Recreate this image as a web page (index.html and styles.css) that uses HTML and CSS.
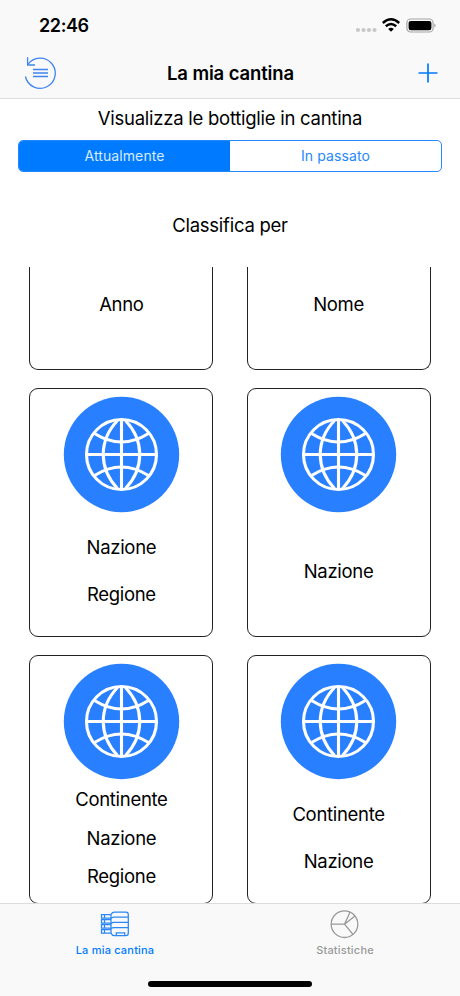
FILE: index.html
```html
<!DOCTYPE html>
<html lang="it">
<head>
<meta charset="utf-8">
<title>La mia cantina</title>
<link rel="stylesheet" href="styles.css">
</head>
<body>
<svg class="defs" width="0" height="0" aria-hidden="true">
  <symbol id="globe" viewBox="-58.5 -58.5 117 117">
    <circle r="57.7" fill="#287fff"/>
    <g fill="none" stroke="#fff" stroke-width="3.1">
      <circle r="35"/>
      <path d="M0-35V35M-35 0H35"/>
      <path d="M-4-34C-23-14-23 14-4 34M4-34C23-14 23 14 4 34"/>
      <path d="M-27-21Q0-4 27-21M-27 21Q0 4 27 21"/>
    </g>
  </symbol>
</svg>
<div class="screen">
  <header class="header">
    <div class="status">
      <span class="time">22:46</span>
      <div class="indicators">
        <svg class="dots" width="22" height="18" viewBox="0 0 22 18"><g fill="#c8c8c8"><circle cx="2" cy="13" r="2.1"/><circle cx="7.5" cy="13" r="2.1"/><circle cx="13" cy="13" r="2.1"/><circle cx="18.5" cy="13" r="2.1"/></g></svg>
        <svg class="wifi" width="18" height="18" viewBox="0 0 18 18"><g fill="none" stroke="#000" stroke-width="2.5"><path d="M.8 6Q9-1.4 17.2 6"/><path d="M3.8 9.2Q9 4.8 14.2 9.2"/></g><path d="M6.2 11.9Q9 9.7 11.8 11.9L9 14.8Z"/></svg>
        <svg class="battery" width="30" height="18" viewBox="0 0 30 18"><rect x=".9" y="2" width="26.2" height="13" rx="3.8" fill="none" stroke="#a5a5a5" stroke-width="1.2"/><rect x="2.6" y="3.9" width="22.8" height="9.3" rx="2.2"/><path d="M28.3 6.5q2.8 1.9 0 4z" fill="#a5a5a5"/></svg>
      </div>
    </div>
    <nav class="navbar">
      <svg class="history" width="34" height="34" viewBox="0 0 34 34"><g fill="none" stroke="#3f85f0" stroke-width="1.3"><path d="M2.4 20.5A15.1 15.1 0 1 0 4.9 8.4"/><path d="M4.6 1.3V9H12"/><path d="M10 13.5H25M10 17H25M10 20.5H25" stroke-width="1.5"/></g></svg>
      <h1 class="title">La mia cantina</h1>
      <svg class="plus" width="20" height="20" viewBox="0 0 20 20"><path d="M10 .5V19.5M.5 10H19.5" stroke="#007aff" stroke-width="1.7"/></svg>
    </nav>
  </header>
  <main class="content">
    <p class="prompt">Visualizza le bottiglie in cantina</p>
    <div class="segments"><span class="segment active">Attualmente</span><span class="segment">In passato</span></div>
    <h2 class="subtitle">Classifica per</h2>
    <div class="scroller">
      <div class="grid">
        <div class="card partial"><span>Anno</span></div>
        <div class="card partial"><span>Nome</span></div>
        <div class="card"><svg class="globe"><use href="#globe"/></svg><div class="labels"><span>Nazione</span><span>Regione</span></div></div>
        <div class="card"><svg class="globe"><use href="#globe"/></svg><div class="labels"><span>Nazione</span></div></div>
        <div class="card"><svg class="globe"><use href="#globe"/></svg><div class="labels three"><span>Continente</span><span>Nazione</span><span>Regione</span></div></div>
        <div class="card"><svg class="globe"><use href="#globe"/></svg><div class="labels"><span>Continente</span><span>Nazione</span></div></div>
      </div>
    </div>
  </main>
  <footer class="footer">
    <div class="tabs">
      <div class="tab selected">
        <svg width="30" height="30" viewBox="0 0 30 30"><g fill="none" stroke="#2a87f5" stroke-width="1.25"><path d="M11 5.6Q12 3.1 14.5 3.1H26Q28.3 3.1 28.3 5.5V24Q28.3 26.6 26 26.6H14.5Q12 26.6 11 24.2H1.5V20.6H11"/><path d="M11 5.6H1.5V9H11M11 10.6H1.5V14H11M11 15.6H1.5V19H11M4.5 5.6V9M4.5 10.6V14M4.5 15.6V19M4.5 20.6V24.2M11 5.6V24.2"/><path d="M11 9.5Q12 8.2 14 8.2H28M11 14.5Q12 13.3 14 13.3H28M11 19.7Q12 18.5 14 18.5H28M16.3 26.5V23.8H24.7V26.5"/></g></svg>
        <span>La mia cantina</span>
      </div>
      <div class="tab">
        <svg width="30" height="30" viewBox="0 0 30 30"><g fill="none" stroke="#999" stroke-width="1.3"><circle cx="14.5" cy="15.2" r="13.3"/><path d="M1.2 15.2H14.5L20.1 3.1M14.5 15.2L25 7M14.5 15.2L23 25.4"/></g></svg>
        <span>Statistiche</span>
      </div>
    </div>
    <div class="home-indicator"></div>
  </footer>
</div>
</body>
</html>
```
FILE: styles.css
```css
* { box-sizing: border-box; }

body {
  margin: 0;
  font-family: Inter, "Liberation Sans", sans-serif;
  color: #000;
  background: #fff;
}

h1, h2, p { margin: 0; font-weight: 400; }
svg { display: block; flex: none; }
.defs { position: absolute; }

.screen {
  width: 460px;
  height: 996px;
  display: flex;
  flex-direction: column;
  overflow: hidden;
}

.header {
  height: 99px;
  flex: none;
  background: #f9f9f9;
  border-bottom: 1px solid #dedede;
}

.status {
  height: 50px;
  padding: 1px 24px 0 39px;
  display: flex;
  align-items: center;
  justify-content: space-between;
}

.time { font-size: 18px; font-weight: 600; line-height: 22px; letter-spacing: -0.4px; }
.indicators { display: flex; gap: 6px; }
.dots { margin-right: -2px; }

.navbar {
  height: 46px;
  padding: 0 22px 0 23px;
  display: grid;
  grid-template-columns: 34px 1fr 34px;
  align-items: center;
}

.title {
  text-align: center;
  font-size: 18.5px;
  font-weight: 600;
  line-height: 24px;
  letter-spacing: -0.13px;
}

.plus { justify-self: end; }

.content {
  height: 805px;
  flex: none;
  display: flex;
  flex-direction: column;
}

.prompt, .subtitle {
  text-align: center;
  font-size: 18.5px;
  line-height: 24px;
  letter-spacing: -0.26px;
}

.prompt { padding-top: 7px; height: 40.5px; }

.segments {
  height: 32.5px;
  margin: 0 18px;
  flex: none;
  display: flex;
  border: 1.3px solid #2688ff;
  border-radius: 5px;
  overflow: hidden;
}

.segment {
  flex: 1;
  display: flex;
  align-items: center;
  justify-content: center;
  padding-bottom: 1px;
  font-size: 14px;
  letter-spacing: 0.1px;
  color: #2688ff;
}

.segment.active { background: #007aff; color: #d9ebff; }
.subtitle { height: 95px; padding-top: 41px; }

.scroller { flex: 1; overflow: hidden; }

.grid {
  display: grid;
  grid-template-columns: 184px 184px;
  grid-template-rows: 103px 249px 249px;
  gap: 18px 33.2px;
  padding-left: 29.4px;
}

.card {
  border: 1.3px solid #222;
  border-radius: 9px;
  display: flex;
  flex-direction: column;
  align-items: center;
  padding-top: 6.5px;
  font-size: 18.5px;
  line-height: 23px;
  letter-spacing: -0.3px;
}

.card.partial {
  border-top: 0;
  border-radius: 0 0 9px 9px;
  padding-top: 26px;
}

.globe { width: 117px; height: 117px; }

.labels {
  height: 117px;
  display: flex;
  flex-direction: column;
  align-items: center;
  justify-content: center;
  gap: 23.6px;
}

.labels.three { gap: 15.5px; }

.footer {
  flex: 1;
  background: #f9f9f9;
  box-shadow: 0 -1px #dcdcdc;
  display: flex;
  flex-direction: column;
  justify-content: space-between;
  align-items: center;
  padding-bottom: 9px;
}

.tabs { display: flex; width: 100%; }

.tab {
  flex: 1;
  padding-top: 5px;
  display: flex;
  flex-direction: column;
  align-items: center;
  gap: 4px;
  font-size: 11px;
  font-weight: 500;
  line-height: 14px;
  letter-spacing: 0.2px;
  color: #999;
}

.selected { color: #007aff; }

.home-indicator {
  width: 164px;
  height: 6px;
  border-radius: 3px;
  background: #000;
}
```
